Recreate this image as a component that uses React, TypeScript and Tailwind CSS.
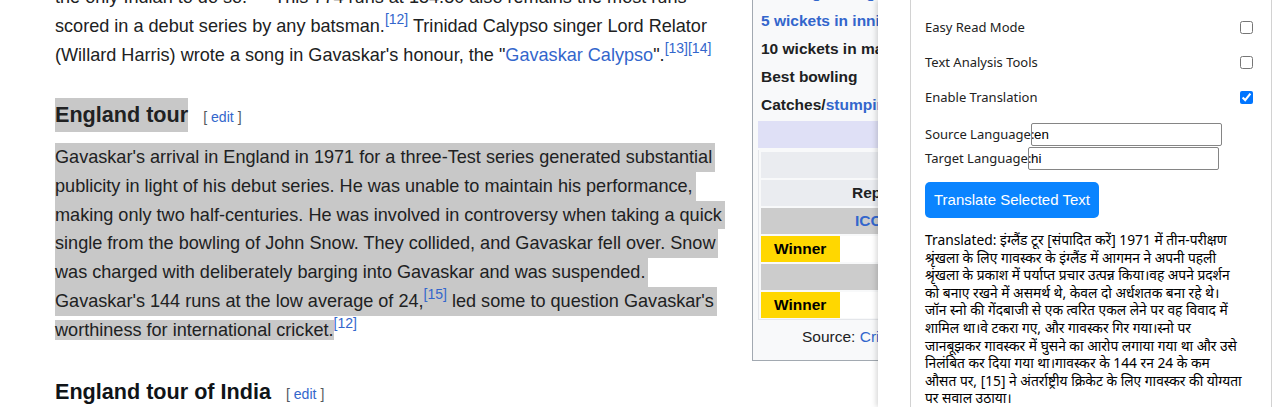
import React from "react";

const Sup = ({ children }: { children: React.ReactNode }) => (
  <span className="relative -top-[0.55em] text-[14px] leading-none text-[#3366cc]">{children}</span>
);

const bodyLines: React.ReactNode[] = [
  "Gavaskar's arrival in England in 1971 for a three-Test series generated substantial",
  "publicity in light of his debut series. He was unable to maintain his performance,",
  "making only two half-centuries. He was involved in controversy when taking a quick",
  "single from the bowling of John Snow. They collided, and Gavaskar fell over. Snow",
  "was charged with deliberately barging into Gavaskar and was suspended.",
  <>
    Gavaskar's 144 runs at the low average of 24,<Sup>[15]</Sup> led some to question Gavaskar's
  </>,
];

const hindiLines = [
  "Translated: इंग्लैंड टूर [संपादित करें] 1971 में तीन-परीक्षण",
  "श्रृंखला के लिए गावस्कर के इंग्लैंड में आगमन ने अपनी पहली",
  "श्रृंखला के प्रकाश में पर्याप्त प्रचार उत्पन्न किया।वह अपने प्रदर्शन",
  "को बनाए रखने में असमर्थ थे, केवल दो अर्धशतक बना रहे थे।",
  "जॉन स्नो की गेंदबाजी से एक त्वरित एकल लेने पर वह विवाद में",
  "शामिल था।वे टकरा गए, और गावस्कर गिर गया।स्नो पर",
  "जानबूझकर गावस्कर में घुसने का आरोप लगाया गया था और उसे",
  "निलंबित कर दिया गया था।गावस्कर के 144 रन 24 के कम",
  "औसत पर, [15] ने अंतर्राष्ट्रीय क्रिकेट के लिए गावस्कर की योग्यता",
  "पर सवाल उठाया।",
];

function Edit() {
  return (
    <span className="ml-[15px] text-[14.1px] font-normal text-[#54595d]">
      [ <span className="text-[#3366cc]">edit</span> ]
    </span>
  );
}

function Toggle({ label, checked }: { label: string; checked?: boolean }) {
  return (
    <div className="flex h-[35px] items-center justify-between">
      <span>{label}</span>
      <input
        type="checkbox"
        defaultChecked={checked}
        className="m-0 h-[13px] w-[13px] accent-[#0075ff]"
      />
    </div>
  );
}

export default function App() {
  return (
    <div className="relative h-[407px] w-[1280px] overflow-hidden bg-white">
      <div className="flex items-start pl-[55px]">
        <article className="w-[697px] shrink-0 font-['Liberation_Sans',Arial,sans-serif] text-[18.1px] leading-[28.8px] text-[#202122]">
          <div className="-mt-[16.7px] whitespace-nowrap">
            <div>
              the only Indian to do so.<Sup>[11]</Sup> This 774 runs at 154.80 also remains the most runs
            </div>
            <div>
              scored in a debut series by any batsman.<Sup>[12]</Sup> Trinidad Calypso singer Lord Relator
            </div>
            <div>
              (Willard Harris) wrote a song in Gavaskar's honour, the "
              <span className="text-[#3366cc]">Gavaskar Calypso</span>".<Sup>[13]</Sup>
              <Sup>[14]</Sup>
            </div>
          </div>

          <h3 className="mt-[28px] flex items-baseline text-[21.6px] font-bold leading-[34px] text-[#202122]">
            <span className="bg-[#c8c8c8]">England tour</span>
            <Edit />
          </h3>

          <div className="mt-[9.4px] whitespace-nowrap">
            {bodyLines.map((l, i) => (
              <div key={i} className="w-fit bg-[#c8c8c8] pr-[3px]">
                {l}
              </div>
            ))}
            <div>
              <span className="bg-[#c8c8c8]">worthiness for international cricket.</span>
              <Sup>[12]</Sup>
            </div>
          </div>

          <h3 className="mt-[30.5px] flex items-baseline text-[21.6px] font-bold leading-[34px] text-[#101418]">
            <span>England tour of India</span>
            <Edit />
          </h3>
        </article>

        <aside className="-mt-[21px] w-[330px] shrink-0 border-b border-l border-[#a2a9b1] bg-[#f8f9fa] pb-[9px] font-['Liberation_Sans',Arial,sans-serif] text-[15.5px] leading-[28px] text-[#202122]">
          <div className="flex h-[28px] items-center whitespace-nowrap pl-[8px] font-bold text-[#3366cc]">
            Bowling average
          </div>
          <div className="flex h-[28px] items-center whitespace-nowrap pl-[8px] font-bold text-[#3366cc]">
            5 wickets in innings
          </div>
          <div className="flex h-[28px] items-center whitespace-nowrap pl-[8px] font-bold">10 wickets in match</div>
          <div className="flex h-[28px] items-center whitespace-nowrap pl-[8px] font-bold">Best bowling</div>
          <div className="flex h-[28px] items-center whitespace-nowrap pl-[8px] font-bold">
            Catches/<span className="text-[#3366cc]">stumpings</span>
          </div>
          <div className="ml-[5px] mt-[2px] h-[27px] bg-[#dfe0f6]" />
          <div className="ml-[5px] mt-[2px] flex flex-col gap-[2px] border-b border-l border-[#e4e6ea] bg-[#f8f9fa] pb-[1px] pl-[2px] pt-[2px] font-bold">
            <div className="h-[26px] bg-[#eaecf0]" />
            <div className="flex h-[26px] items-center whitespace-nowrap bg-[#eaecf0] pl-[91px]">Representing India</div>
            <div className="flex h-[26px] items-center whitespace-nowrap bg-[#cccccc] pl-[94px] text-[#3366cc]">
              ICC Cricket World Cup
            </div>
            <div className="flex h-[26px] bg-white">
              <div className="flex w-[79px] items-center bg-[#ffd700] pl-[13px] text-black">Winner</div>
            </div>
            <div className="h-[26px] bg-[#cccccc]" />
            <div className="flex h-[26px] bg-white">
              <div className="flex w-[79px] items-center bg-[#ffd700] pl-[13px] text-black">Winner</div>
            </div>
          </div>
          <div className="mt-[3px] h-[28px] whitespace-nowrap pl-[49px]">
            Source: <span className="text-[#3366cc]">Cricinfo</span>
          </div>
        </aside>
      </div>

      <div className="absolute right-0 top-0 h-[407px] w-[402px] bg-white shadow-[-2px_0_5px_rgba(0,0,0,0.15)]">
        <div className="ml-[32px] h-full w-[362px] border-x border-[#d2d2d2] pl-[14px] pr-[18px] pt-[10px] font-['Noto_Sans','Noto_Sans_Devanagari','Lohit_Devanagari','FreeSans',sans-serif] text-[13px] text-[#222]">
          <Toggle label="Easy Read Mode" />
          <Toggle label="Text Analysis Tools" />
          <Toggle label="Enable Translation" checked />

          <div className="mt-[8px] flex h-[23px] items-center">
            <span className="w-[106px] shrink-0 whitespace-nowrap">Source Language:</span>
            <input
              defaultValue="en"
              className="h-[23px] w-[191px] rounded-[2px] border border-[#858585] px-[2px] font-['Liberation_Sans',Arial,sans-serif] text-[13.33px] text-black"
            />
          </div>
          <div className="mt-[1px] flex h-[23px] items-center">
            <span className="w-[103px] shrink-0 whitespace-nowrap">Target Language:</span>
            <input
              defaultValue="hi"
              className="h-[23px] w-[191px] rounded-[2px] border border-[#858585] px-[2px] font-['Liberation_Sans',Arial,sans-serif] text-[13.33px] text-black"
            />
          </div>

          <button className="mt-[12px] h-[36px] rounded-[5px] bg-[#0a84ff] px-[9px] font-['Liberation_Sans',Arial,sans-serif] text-[15px] text-white">
            Translate Selected Text
          </button>

          <div className="mt-[13px] text-[13.8px] leading-[17.6px] text-black">
            {hindiLines.map((l, i) => (
              <div key={i} className="whitespace-nowrap">
                {l}
              </div>
            ))}
          </div>
        </div>
      </div>
    </div>
  );
}
